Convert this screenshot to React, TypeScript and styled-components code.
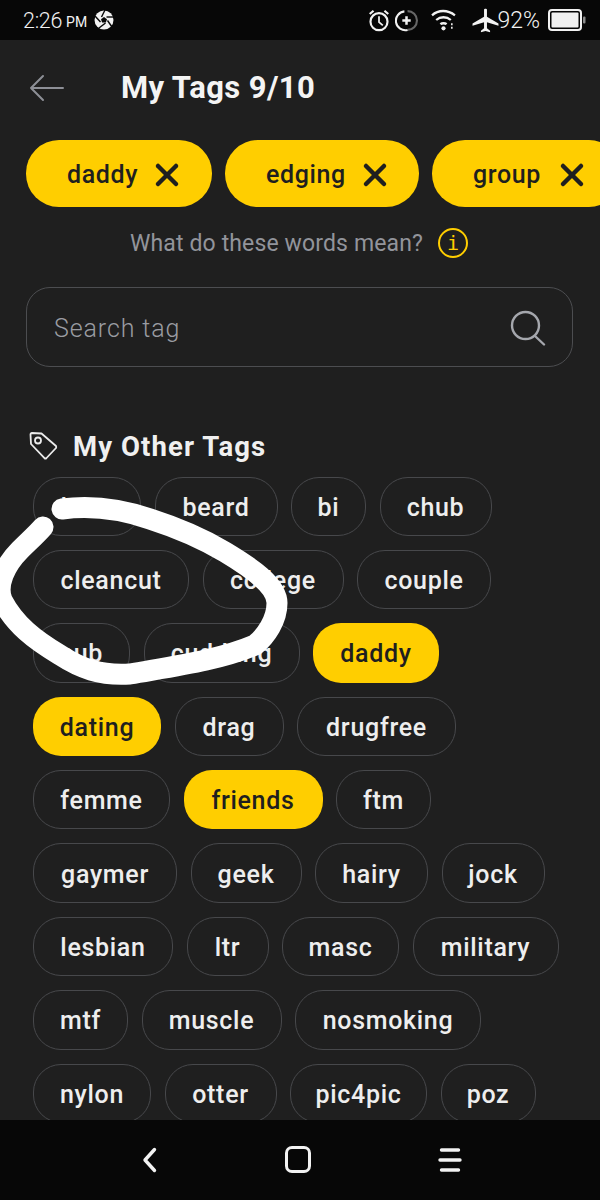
import React, { ReactElement } from 'react'
import styled, { createGlobalStyle } from 'styled-components'
import { X } from 'lucide-react'

const GlobalStyle = createGlobalStyle`
  html, body {
    margin: 0;
    padding: 0;
    background: #1f1f1f;
  }
  * {
    box-sizing: border-box;
  }
`

const yellow = '#ffce00'
const font = '"Roboto", "Liberation Sans", sans-serif'

const Screen = styled.div`
  position: relative;
  width: 600px;
  height: 1200px;
  display: flex;
  flex-direction: column;
  overflow: hidden;
  background: #1f1f1f;
  font-family: ${font};
`

const StatusBar = styled.div`
  flex: 0 0 40px;
  display: flex;
  align-items: center;
  justify-content: space-between;
  padding: 0 14px 0 23px;
  background: #070707;
  color: #f2f2f2;
`

const StatusGroup = styled.div`
  display: flex;
  align-items: center;
  gap: ${p => p.$gap ?? 0}px;
`

const Clock = styled.span`
  font-size: 21.5px;
  font-weight: 300;
  letter-spacing: -0.3px;
`

const Meridiem = styled.span`
  font-size: 14px;
  margin: 3px 7px 0 4px;
`

const Percent = styled.span`
  font-size: 23px;
  font-weight: 300;
  margin: 0 8px 0 -2px;
`

const Content = styled.div`
  flex: 1;
  min-height: 0;
  overflow: hidden;
`

const Header = styled.div`
  height: 97px;
  display: flex;
  align-items: center;
  padding: 0 0 1px 29px;
`

const BackButton = styled.div`
  width: 92px;
  display: flex;
`

const Title = styled.h1`
  margin: 0;
  font-size: 31px;
  line-height: 36px;
  font-weight: 700;
  color: #f4f4f4;
  letter-spacing: 0.4px;
`

const SelectedRow = styled.div`
  display: flex;
  gap: 13px;
  padding: 3px 0 0 26px;
  width: 800px;
`

const SelectedChip = styled.div`
  height: 67px;
  width: ${p => p.$w}px;
  flex: none;
  display: flex;
  align-items: center;
  justify-content: space-between;
  padding: 2px ${p => p.$pr}px 0 41px;
  border-radius: 33px;
  background: ${yellow};
  color: #1f1f1f;
  font-size: 25px;
  font-weight: 500;
  letter-spacing: 0.6px;
`

const Hint = styled.div`
  display: flex;
  align-items: center;
  height: 36px;
  margin-top: 18px;
  padding-left: 130px;
  font-size: 23px;
  color: #92949b;
  letter-spacing: 0.13px;
  gap: 15px;
`

const InfoBadge = styled.span`
  width: 30px;
  height: 30px;
  display: flex;
  align-items: center;
  justify-content: center;
  border: 2.5px solid ${yellow};
  border-radius: 50%;
  color: ${yellow};
  font-size: 20px;
  font-family: "DejaVu Sans Mono", monospace;
`

const SearchBox = styled.div`
  display: flex;
  align-items: center;
  justify-content: space-between;
  height: 80px;
  margin: 26px 27px 0 26px;
  padding: 2px 26px 0 27px;
  border: 1.5px solid #4c4d50;
  border-radius: 24px;
  color: #9a9ca2;
  font-size: 25px;
  font-weight: 300;
  letter-spacing: 0.9px;
`

const SectionTitle = styled.div`
  display: flex;
  align-items: center;
  gap: 15px;
  margin: 59px 0 0 28px;
  height: 40px;
  color: #f0f0f0;
  font-size: 27.5px;
  font-weight: 700;
  letter-spacing: 1.1px;
`

const ChipList = styled.div`
  display: flex;
  flex-direction: column;
  gap: 14px;
  margin-top: 10.5px;
  padding-left: 33px;
`

const ChipRow = styled.div`
  display: flex;
  gap: 13.5px;
`

const Chip = styled.div`
  flex: none;
  width: ${p => p.$w}px;
  height: 59.4px;
  display: flex;
  align-items: center;
  justify-content: center;
  padding-top: 2px;
  border-radius: 28px;
  border: ${p => (p.$on ? 'none' : '1.5px solid #47484b')};
  background: ${p => (p.$on ? yellow : 'transparent')};
  color: ${p => (p.$on ? '#1f1f1f' : '#eeeeee')};
  font-size: 25px;
  font-weight: 500;
  letter-spacing: 0.7px;
`

const NavBar = styled.div`
  flex: 0 0 80px;
  display: flex;
  align-items: center;
  justify-content: center;
  gap: 127px;
  padding: 0 0 1px 4px;
  background: #070707;
`

const Scribble = styled.svg`
  position: absolute;
  left: 0;
  top: 0;
  pointer-events: none;
`

interface Tag {
  name: string
  width: number
  on?: boolean
}

const rows: Tag[][] = [
  [{ name: 'bear', width: 108 }, { name: 'beard', width: 123 }, { name: 'bi', width: 75 }, { name: 'chub', width: 112 }],
  [{ name: 'cleancut', width: 156 }, { name: 'college', width: 141 }, { name: 'couple', width: 134 }],
  [{ name: 'cub', width: 97 }, { name: 'cuddling', width: 156 }, { name: 'daddy', width: 126, on: true }],
  [{ name: 'dating', width: 128, on: true }, { name: 'drag', width: 109 }, { name: 'drugfree', width: 159 }],
  [{ name: 'femme', width: 137 }, { name: 'friends', width: 139, on: true }, { name: 'ftm', width: 95 }],
  [{ name: 'gaymer', width: 144 }, { name: 'geek', width: 111 }, { name: 'hairy', width: 113 }, { name: 'jock', width: 103 }],
  [{ name: 'lesbian', width: 140 }, { name: 'ltr', width: 82 }, { name: 'masc', width: 117 }, { name: 'military', width: 146 }],
  [{ name: 'mtf', width: 95 }, { name: 'muscle', width: 140 }, { name: 'nosmoking', width: 186 }],
  [{ name: 'nylon', width: 118 }, { name: 'otter', width: 112 }, { name: 'pic4pic', width: 137 }, { name: 'poz', width: 95 }]
]

const ApertureIcon = (): ReactElement => (
  <svg width='20' height='20' viewBox='0 0 20 20'>
    <circle cx='10' cy='10' r='9.5' fill='#f2f2f2' />
    <g stroke='#070707' strokeWidth='1.4' fill='none'>
      <path d='M7.5 7 L11 0' />
      <path d='M12.5 7 L20 7' />
      <path d='M13.5 10.5 L18 17' />
      <path d='M11.5 13 L5 18' />
      <path d='M6.5 12 L1 6' />
    </g>
    <path d='M10 7 L13 9.2 L11.9 12.6 L8.1 12.6 L7 9.2 Z' fill='#070707' />
  </svg>
)

const AlarmIcon = (): ReactElement => (
  <svg width='22' height='24' viewBox='0 0 20 22' fill='none' stroke='#f2f2f2' strokeWidth='2'>
    <circle cx='10' cy='12.5' r='7.8' />
    <path d='M10 7.5 V13 L13.5 16' strokeWidth='1.6' />
    <path d='M1.5 5.5 L5 2.5 M18.5 5.5 L15 2.5' />
  </svg>
)

const DataSaverIcon = (): ReactElement => (
  <svg width='23' height='23' viewBox='0 0 22 22' fill='none' stroke='#f2f2f2' strokeWidth='2'>
    <path d='M12 2 A9 9 0 0 1 12 20' stroke='#666' />
    <path d='M12 20 A9 9 0 1 1 9 2.3' />
    <path d='M11 7 V15 M7 11 H15' strokeWidth='2.4' />
  </svg>
)

const WifiIcon = (): ReactElement => (
  <svg width='25' height='24' viewBox='0 0 24 22' fill='none' stroke='#f2f2f2' strokeWidth='2.2'>
    <path d='M1 6.5 C7 1 16 1 23 6.5' />
    <path d='M5 11 C9 7.5 15 7.5 19 11' />
    <path d='M9 15 C10.5 13.8 13.5 13.8 15 15' />
    <circle cx='12' cy='19' r='2' fill='#f2f2f2' stroke='none' />
    <path d='M20 14 V20' strokeWidth='1.5' strokeDasharray='2 1.5' />
  </svg>
)

const PlaneIcon = (): ReactElement => (
  <svg width='27' height='25' viewBox='0 0 26 24'>
    <path
      fill='#f2f2f2'
      d='M11.6 1.5 C11.6 0.3 14.4 0.3 14.4 1.5 V8.5 L25.5 15 V17 L14.4 13.8 V19.5 L17.4 21.8 V23.2 L13 22.2 L8.6 23.2 V21.8 L11.6 19.5 V13.8 L0.5 17 V15 L11.6 8.5 Z'
    />
  </svg>
)

const BatteryIcon = (): ReactElement => (
  <svg width='38' height='22' viewBox='0 0 38 22'>
    <rect x='1' y='1' width='32' height='20' rx='3' fill='none' stroke='#f2f2f2' strokeWidth='2' />
    <rect x='3.5' y='3.5' width='27' height='15' rx='1' fill='#f2f2f2' />
    <rect x='35' y='7.5' width='2.5' height='7' rx='1' fill='#8a8a8a' />
  </svg>
)

const BackArrow = (): ReactElement => (
  <svg width='36' height='28' viewBox='0 0 36 28' fill='none' stroke='#8d8f96' strokeWidth='2' strokeLinecap='round' strokeLinejoin='round'>
    <path d='M34 14 H2 M14 2 L2 14 L14 26' />
  </svg>
)

const SearchIcon = (): ReactElement => (
  <svg width='36' height='36' viewBox='0 0 36 36' fill='none' stroke='#a5a7ad' strokeWidth='2.4' strokeLinecap='round'>
    <circle cx='15.5' cy='15.5' r='13.5' />
    <path d='M25 26 L34 34.5' />
  </svg>
)

const TagIcon = (): ReactElement => (
  <svg width='30' height='30' viewBox='0 0 30 30' fill='none' stroke='#ececec' strokeWidth='1.8' strokeLinejoin='round'>
    <path d='M2.5 3.5 Q2.5 2 4 2 L13.5 2.5 L28 15 Q28.5 16 28 17 L18.5 27 Q17.5 28 16.5 27.2 L3 13 Z' />
    <circle cx='10' cy='9.5' r='3' />
  </svg>
)

const NavBack = (): ReactElement => (
  <svg width='16' height='26' viewBox='0 0 16 26' fill='none' stroke='#f2f2f2' strokeWidth='3.4' strokeLinecap='round' strokeLinejoin='round'>
    <path d='M12.5 2.5 L3 13 L12.5 23.5' />
  </svg>
)

const NavHome = (): ReactElement => (
  <svg width='26' height='27' viewBox='0 0 26 27' fill='none' stroke='#f2f2f2' strokeWidth='3'>
    <rect x='1.5' y='1.5' width='23' height='24' rx='5.5' />
  </svg>
)

const NavRecent = (): ReactElement => (
  <svg width='24' height='24' viewBox='0 0 24 24' fill='none' stroke='#f2f2f2' strokeWidth='3.4' strokeLinecap='round'>
    <path d='M3.5 2 H20.5 M2 12 H22 M3.5 22 H20.5' />
  </svg>
)

export default function App (): ReactElement {
  return (
    <Screen>
      <GlobalStyle />
      <StatusBar>
        <StatusGroup>
          <Clock>2:26</Clock>
          <Meridiem>PM</Meridiem>
          <ApertureIcon />
        </StatusGroup>
        <StatusGroup $gap={13}>
          <StatusGroup $gap={5}>
            <AlarmIcon />
            <DataSaverIcon />
          </StatusGroup>
          <StatusGroup $gap={16}>
            <WifiIcon />
            <StatusGroup>
              <PlaneIcon />
              <Percent>92%</Percent>
              <BatteryIcon />
            </StatusGroup>
          </StatusGroup>
        </StatusGroup>
      </StatusBar>
      <Content>
        <Header>
          <BackButton>
            <BackArrow />
          </BackButton>
          <Title>My Tags 9/10</Title>
        </Header>
        <SelectedRow>
          <SelectedChip $w={186} $pr={27}>daddy<X size={36} strokeWidth={3} color='#1f1f1f' /></SelectedChip>
          <SelectedChip $w={194} $pr={26}>edging<X size={36} strokeWidth={3} color='#1f1f1f' /></SelectedChip>
          <SelectedChip $w={190} $pr={32}>group<X size={36} strokeWidth={3} color='#1f1f1f' /></SelectedChip>
        </SelectedRow>
        <Hint>
          What do these words mean?
          <InfoBadge>i</InfoBadge>
        </Hint>
        <SearchBox>
          Search tag
          <SearchIcon />
        </SearchBox>
        <SectionTitle>
          <TagIcon />
          My Other Tags
        </SectionTitle>
        <ChipList>
          {rows.map((row, i) => (
            <ChipRow key={i}>
              {row.map(tag => (
                <Chip key={tag.name} $w={tag.width} $on={tag.on}>{tag.name}</Chip>
              ))}
            </ChipRow>
          ))}
        </ChipList>
      </Content>
      <NavBar>
        <NavBack />
        <NavHome />
        <NavRecent />
      </NavBar>
      <Scribble width='600' height='1200' viewBox='0 0 600 1200' fill='none'>
        <path
          d='M62 509 C85 506 115 507 150 519 C175 527 200 537 225 552 C250 567 277 585 277 603 C277 620 266 636 255 645 C220 660 175 666 130 674 C100 676 80 668 60 655 C35 640 15 625 2 600 C-4 585 5 565 20 550 C28 542 36 535 43 527'
          stroke='#ffffff'
          strokeWidth='21'
          strokeLinecap='round'
          strokeLinejoin='round'
        />
      </Scribble>
    </Screen>
  )
}
